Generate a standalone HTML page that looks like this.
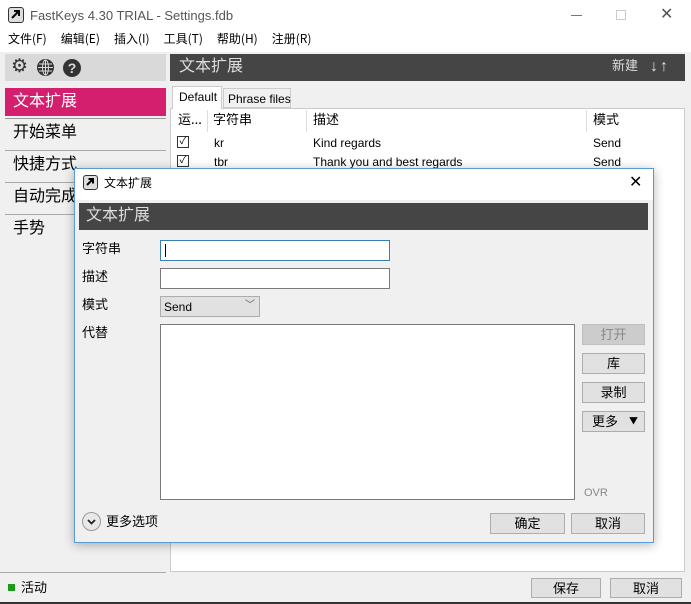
<!DOCTYPE html>
<html><head><meta charset="utf-8"><style>
*{margin:0;padding:0;box-sizing:border-box}
body{width:691px;height:604px;position:relative;overflow:hidden;background:#f0f0f0;font-family:"Liberation Sans","Noto Sans CJK SC",sans-serif;font-size:12px;color:#000;line-height:1.2}
.a{position:absolute;white-space:nowrap}
.btn{position:absolute;background:#e1e1e1;border:1px solid #adadad;text-align:center;font-size:13px;line-height:18px}
.cn{font-family:"Noto Sans CJK SC",sans-serif}
</style></head><body>
<div class="a" style="left:0;top:0;width:691px;height:30px;background:#fff"></div>
<div class="a" style="left:8px;top:7px;width:16px;height:16px;border:1.5px solid #333;border-radius:3px;background:#ddd"><svg width="13" height="13" viewBox="0 0 13 13" style="position:absolute;left:0;top:0"><path d="M3 10L10 3M5 3h5v5" stroke="#000" stroke-width="2" fill="none"/></svg></div>
<div class="a" style="left:30px;top:8px;font-size:13px;color:#555">FastKeys 4.30 TRIAL - Settings.fdb</div>
<div class="a" style="left:571px;top:15px;width:11px;height:1px;background:#777"></div>
<div class="a" style="left:616px;top:10px;width:10px;height:10px;border:1px solid #ccc"></div>
<div class="a" style="left:660px;top:5px;font-size:16px;color:#555">✕</div>
<div class="a cn" style="left:0;top:30px;width:691px;height:22px;background:#fff;font-size:12px;padding:2px 0 0 8px">
<span style="margin-right:14px">文件(F)</span><span style="margin-right:14px">编辑(E)</span><span style="margin-right:14px">插入(I)</span><span style="margin-right:14px">工具(T)</span><span style="margin-right:14px">帮助(H)</span><span>注册(R)</span></div>
<div class="a" style="left:5px;top:54px;width:161px;height:27px;background:#d9d9d9"></div>
<div class="a" style="left:11px;top:57px;font-size:19px;color:#333;line-height:20px">⚙</div>
<div class="a" style="left:37px;top:59px;width:17px;height:17px;border-radius:50%;background:#333"><svg width="17" height="17" viewBox="0 0 17 17"><ellipse cx="8.5" cy="8.5" rx="3" ry="7.5" fill="none" stroke="#d9d9d9" stroke-width="1"/><path d="M1 8.5h15M2 5h13M2 12h13M8.5 1v15" stroke="#d9d9d9" stroke-width="1"/></svg></div>
<div class="a" style="left:63px;top:59px;width:18px;height:18px;border-radius:50%;background:#333;color:#d9d9d9;font-weight:bold;font-size:14px;text-align:center;line-height:18px">?</div>
<div class="a cn" style="left:5px;top:88px;width:161px;height:28px;background:#d41f6e;color:#fff;font-size:16px;padding:2px 0 0 8px">文本扩展</div>
<div class="a" style="left:5px;top:118px;width:161px;height:1px;background:#999"></div>
<div class="a cn" style="left:13px;top:121px;font-size:16px">开始菜单</div>
<div class="a" style="left:5px;top:150px;width:161px;height:1px;background:#aaa"></div>
<div class="a cn" style="left:13px;top:153px;font-size:16px">快捷方式</div>
<div class="a" style="left:5px;top:182px;width:161px;height:1px;background:#aaa"></div>
<div class="a cn" style="left:13px;top:185px;font-size:16px">自动完成</div>
<div class="a" style="left:5px;top:214px;width:161px;height:1px;background:#aaa"></div>
<div class="a cn" style="left:13px;top:217px;font-size:16px">手势</div>
<div class="a" style="left:0;top:572px;width:166px;height:1px;background:#aaa"></div>
<div class="a cn" style="left:170px;top:54px;width:515px;height:27px;background:#454545;color:#ddd;font-size:16px;padding:1px 0 0 9px">文本扩展</div>
<div class="a cn" style="left:612px;top:57px;color:#ddd;font-size:13px">新建</div>
<div class="a" style="left:650px;top:57px;color:#ddd;font-size:16px;font-weight:bold;letter-spacing:2px">↓↑</div>
<div class="a" style="left:170px;top:108px;width:515px;height:464px;background:#fff;border:1px solid #ccc"></div>
<div class="a" style="left:172px;top:86px;width:50px;height:23px;background:#fff;border:1px solid #ccc;border-bottom:none;padding:3px 0 0 6px">Default</div>
<div class="a" style="left:223px;top:88px;width:68px;height:20px;background:#f0f0f0;border:1px solid #ccc;padding:3px 0 0 4px">Phrase files</div>
<div class="a cn" style="left:178px;top:111px;font-size:13px">运...</div>
<div class="a" style="left:207px;top:110px;width:1px;height:22px;background:#ddd"></div>
<div class="a cn" style="left:213px;top:111px;font-size:13px">字符串</div>
<div class="a" style="left:306px;top:110px;width:1px;height:22px;background:#ddd"></div>
<div class="a cn" style="left:313px;top:111px;font-size:13px">描述</div>
<div class="a" style="left:586px;top:110px;width:1px;height:22px;background:#ddd"></div>
<div class="a cn" style="left:593px;top:111px;font-size:13px">模式</div>
<div class="a" style="left:177px;top:136px;width:12px;height:12px;border:1px solid #333;font-size:10px;line-height:10px;text-align:center">✓</div>
<div class="a" style="left:214px;top:136px">kr</div><div class="a" style="left:313px;top:136px">Kind regards</div><div class="a" style="left:593px;top:136px">Send</div>
<div class="a" style="left:177px;top:155px;width:12px;height:12px;border:1px solid #333;font-size:10px;line-height:10px;text-align:center">✓</div>
<div class="a" style="left:214px;top:155px">tbr</div><div class="a" style="left:313px;top:155px">Thank you and best regards</div><div class="a" style="left:593px;top:155px">Send</div>
<div class="a" style="left:8px;top:584px;width:7px;height:7px;background:#1a9c1a"></div>
<div class="a cn" style="left:21px;top:579px;font-size:13px">活动</div>
<div class="btn cn" style="left:531px;top:578px;width:70px;height:20px">保存</div>
<div class="btn cn" style="left:610px;top:578px;width:72px;height:20px">取消</div>
<div class="a" style="left:0;top:602px;width:691px;height:2px;background:#333"></div>
<div class="a" style="left:74px;top:168px;width:580px;height:375px;background:#f0f0f0;border:1px solid #5b9bd5;box-shadow:0 2px 10px rgba(0,0,0,.3)"></div>
<div class="a" style="left:75px;top:169px;width:578px;height:31px;background:#fff"></div>
<div class="a" style="left:83px;top:175px;width:15px;height:15px;border:1.5px solid #333;border-radius:3px;background:#ddd"><svg width="12" height="12" viewBox="0 0 12 12" style="position:absolute;left:0;top:0"><path d="M3 9L9 3M4.5 3H9v4.5" stroke="#000" stroke-width="2" fill="none"/></svg></div>
<div class="a cn" style="left:104px;top:176px;font-size:12px">文本扩展</div>
<div class="a" style="left:629px;top:173px;font-size:16px">✕</div>
<div class="a cn" style="left:79px;top:203px;width:569px;height:27px;background:#454545;color:#ddd;font-size:16px;padding:1px 0 0 7px">文本扩展</div>
<div class="a cn" style="left:82px;top:240px;font-size:13px">字符串</div>
<div class="a cn" style="left:82px;top:268px;font-size:13px">描述</div>
<div class="a cn" style="left:82px;top:296px;font-size:13px">模式</div>
<div class="a cn" style="left:82px;top:324px;font-size:13px">代替</div>
<div class="a" style="left:160px;top:240px;width:230px;height:21px;background:#fff;border:1px solid #3c7fb1"><div class="a" style="left:4px;top:3px;width:1px;height:13px;background:#000"></div></div>
<div class="a" style="left:160px;top:268px;width:230px;height:21px;background:#fff;border:1px solid #7a7a7a"></div>
<div class="a" style="left:160px;top:296px;width:100px;height:21px;background:#e1e1e1;border:1px solid #adadad;padding:3px 0 0 3px">Send<span class="a" style="left:84px;top:3px;font-size:10px;color:#555">﹀</span></div>
<div class="a" style="left:160px;top:324px;width:415px;height:176px;background:#fff;border:1px solid #7a7a7a"></div>
<div class="btn cn" style="left:582px;top:324px;width:63px;height:21px;background:#ccc;border-color:#bfbfbf;color:#888">打开</div>
<div class="btn cn" style="left:582px;top:353px;width:63px;height:21px">库</div>
<div class="btn cn" style="left:582px;top:382px;width:63px;height:21px">录制</div>
<div class="btn cn" style="left:582px;top:411px;width:63px;height:21px;text-align:left;padding-left:9px">更多<span class="a" style="left:46px;top:0;font-size:9px">▼</span></div>
<div class="a" style="left:584px;top:487px;font-size:11px;color:#888">OVR</div>
<div class="a" style="left:82px;top:512px;width:19px;height:19px;border-radius:50%;border:1px solid #999;background:#e8e8e8"><svg width="17" height="17" viewBox="0 0 17 17"><path d="M5 7l3.5 3.5L12 7" stroke="#222" stroke-width="1.8" fill="none"/></svg></div>
<div class="a cn" style="left:106px;top:513px;font-size:13px">更多选项</div>
<div class="btn cn" style="left:490px;top:513px;width:75px;height:21px">确定</div>
<div class="btn cn" style="left:571px;top:513px;width:74px;height:21px">取消</div>
</body></html>
